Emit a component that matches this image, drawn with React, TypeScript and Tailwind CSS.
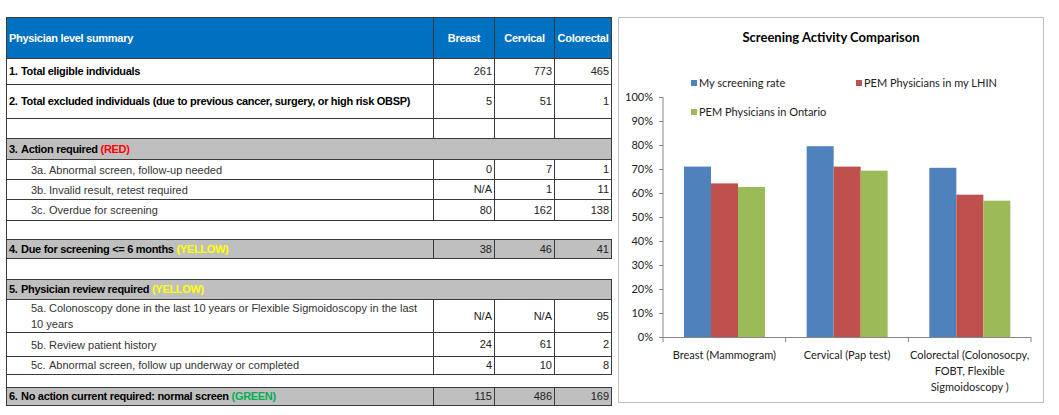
import React from 'react';

const line = 'border border-[#3a3a3a]';
const num = `${line} text-right pr-[2px] font-normal text-[#222]`;

const colors = ['#4f81bd', '#c0504d', '#9bbb59'];

const groups = [
  { label: ['Breast (Mammogram)'], values: [71, 64, 62.5] },
  { label: ['Cervical (Pap test)'], values: [79.5, 71, 69.3] },
  { label: ['Colorectal (Colonosocpy,', 'FOBT, Flexible', 'Sigmoidoscopy )'], values: [70.5, 59.3, 56.8] },
];

function Nums({ values }: { values: (string | number)[] }) {
  return (
    <>
      {values.map((v, i) => (
        <td key={i} className={num}>
          {v}
        </td>
      ))}
    </>
  );
}

function MainRow({
  n,
  label,
  values,
  h,
  grey,
  tag,
}: {
  n: string;
  label: string;
  values?: (string | number)[];
  h: string;
  grey?: boolean;
  tag?: React.ReactNode;
}) {
  return (
    <tr className={`${h} ${grey ? 'bg-[#bfbfbf]' : 'bg-white'}`}>
      <td className={`${line} pl-[2px] font-bold tracking-[-0.3px]`} colSpan={values ? 1 : 4}>
        <span className="inline-block w-[12px]">{n}</span>
        {label}
        {tag}
      </td>
      {values && <Nums values={values} />}
    </tr>
  );
}

function SubRow({ n, children, values, h }: { n: string; children: React.ReactNode; values: (string | number)[]; h: string }) {
  return (
    <tr className={`${h} bg-white text-[#333]`}>
      <td className={`${line} pl-[24px] leading-[16px]`}>
        <span className="inline-block w-[18px]">{n}</span>
        {children}
      </td>
      <Nums values={values} />
    </tr>
  );
}

function Gap({ h }: { h: string }) {
  return (
    <tr className={h}>
      <td colSpan={4} className="border-l border-[#3a3a3a]" />
    </tr>
  );
}

function Tag({ color, children }: { color: string; children: React.ReactNode }) {
  return (
    <span className={color}>
      {' '}
      {children}
    </span>
  );
}

function SummaryTable() {
  return (
    <table className="w-[605px] table-fixed border-collapse text-[11px] text-black">
      <colgroup>
        <col className="w-[427px]" />
        <col className="w-[61px]" />
        <col className="w-[60px]" />
        <col className="w-[57px]" />
      </colgroup>
      <tbody>
        <tr className="h-[41px] bg-[#0070c0] text-white font-bold tracking-[-0.3px]">
          <td className={`${line} pl-[2px]`}>Physician level summary</td>
          <td className={`${line} text-center`}>Breast</td>
          <td className={`${line} text-center`}>Cervical</td>
          <td className={`${line} text-center`}>Colorectal</td>
        </tr>
        <MainRow n="1." label="Total eligible individuals" values={[261, 773, 465]} h="h-[26px]" />
        <MainRow
          n="2."
          label="Total excluded individuals (due to previous cancer, surgery, or high risk OBSP)"
          values={[5, 51, 1]}
          h="h-[34px]"
        />
        <tr className="h-[20px]">
          <td className={line} />
          <td className={line} />
          <td className={line} />
          <td className={line} />
        </tr>
        <MainRow n="3." label="Action required" h="h-[21px]" grey tag={<Tag color="text-[#ff0000]">(RED)</Tag>} />
        <SubRow n="3a." values={[0, 7, 1]} h="h-[20px]">
          Abnormal screen, follow-up needed
        </SubRow>
        <SubRow n="3b." values={['N/A', 1, 11]} h="h-[20px]">
          Invalid result, retest required
        </SubRow>
        <SubRow n="3c." values={[80, 162, 138]} h="h-[21px]">
          Overdue for screening
        </SubRow>
        <Gap h="h-[19px]" />
        <MainRow
          n="4."
          label="Due for screening <= 6 months"
          values={[38, 46, 41]}
          h="h-[19px]"
          grey
          tag={<Tag color="text-[#ffff00]">(YELLOW)</Tag>}
        />
        <Gap h="h-[21px]" />
        <MainRow
          n="5."
          label="Physician review required"
          h="h-[20px]"
          grey
          tag={<Tag color="text-[#ffff00]">(YELLOW)</Tag>}
        />
        <SubRow n="5a." values={['N/A', 'N/A', 95]} h="h-[32px]">
          Colonoscopy done in the last 10 years or Flexible Sigmoidoscopy in the last
          <br />
          10 years
        </SubRow>
        <SubRow n="5b." values={[24, 61, 2]} h="h-[24px]">
          Review patient history
        </SubRow>
        <SubRow n="5c." values={[4, 10, 8]} h="h-[17px]">
          Abnormal screen, follow up underway or completed
        </SubRow>
        <Gap h="h-[13px]" />
        <MainRow
          n="6."
          label="No action current required: normal screen"
          values={[115, 486, 169]}
          h="h-[18px]"
          grey
          tag={<Tag color="text-[#00b050]">(GREEN)</Tag>}
        />
      </tbody>
    </table>
  );
}

function Chart() {
  const x0 = 44;
  const y0 = 280;
  const cat = (412 - 44) / 3;
  const ticks = Array.from({ length: 11 }, (_, i) => i);

  return (
    <div className="w-[426px] h-[386px] border border-[#bfbfbf] bg-white font-['Lato',sans-serif] text-[#222]">
      <div className="h-[39px] flex items-center justify-center text-[13px] font-bold text-black">
        Screening Activity Comparison
      </div>
      <svg width="424" height="345" className="block">
        {/* legend */}
        <g fontSize="11" fill="#222">
          <rect x="72" y="23" width="6" height="6" fill={colors[0]} />
          <text x="80" y="30">My screening rate</text>
          <rect x="237" y="23" width="6" height="6" fill={colors[1]} />
          <text x="245" y="30">PEM Physicians in my LHIN</text>
          <rect x="72" y="52" width="6" height="6" fill={colors[2]} />
          <text x="80" y="59">PEM Physicians in Ontario</text>
        </g>

        {/* y axis */}
        <line x1={x0} y1={40} x2={x0} y2={y0} stroke="#868686" />
        {ticks.map((i) => (
          <g key={i}>
            <line x1={x0 - 4} y1={y0 - i * 24 + 0.5} x2={x0} y2={y0 - i * 24 + 0.5} stroke="#868686" />
            <text x="34" y={y0 - i * 24 + 4} fontSize="11" textAnchor="end" fill="#222">
              {i * 10}%
            </text>
          </g>
        ))}

        {/* bars */}
        {groups.map((g, gi) =>
          g.values.map((v, bi) => (
            <rect
              key={`${gi}-${bi}`}
              x={x0 + gi * cat + 21 + bi * 27}
              y={y0 - v * 2.4}
              width="27"
              height={v * 2.4}
              fill={colors[bi]}
            />
          )),
        )}

        {/* x axis */}
        <line x1={x0} y1={y0 + 0.5} x2={412} y2={y0 + 0.5} stroke="#868686" />
        {[0, 1, 2, 3].map((i) => (
          <line key={i} x1={x0 + i * cat} y1={y0} x2={x0 + i * cat} y2={y0 + 5} stroke="#868686" />
        ))}
        {groups.map((g, gi) => (
          <text key={gi} fontSize="11" textAnchor="middle" fill="#222">
            {g.label.map((l, li) => (
              <tspan key={li} x={x0 + gi * cat + cat / 2} y={302 + li * 16}>
                {l}
              </tspan>
            ))}
          </text>
        ))}
      </svg>
    </div>
  );
}

export default function App() {
  return (
    <div className="w-[1059px] h-[415px] bg-white flex items-start gap-[6px] pt-[17px] pl-[6px] font-['Liberation_Sans',Arial,sans-serif]">
      <SummaryTable />
      <Chart />
    </div>
  );
}
